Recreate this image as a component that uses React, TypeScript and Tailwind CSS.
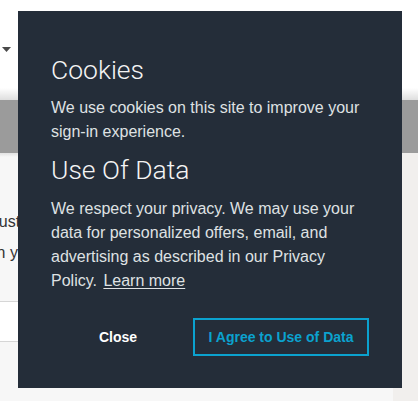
import React from 'react';

const CookieNotice: React.FC = () => {
  return (
    <div className="absolute left-[18px] top-[11px] h-[377px] w-[384px] bg-[#242d39] pl-[33px] pr-[31px] pt-[44px] font-['Liberation_Sans',Arial,sans-serif]">
      <h2 className="font-['Roboto',sans-serif] text-[26.5px] font-light leading-[30px] text-[#f4f4f4]">Cookies</h2>
      <p className="mt-[11px] text-[16px] leading-6 text-[#dfe1e3]">
        We use cookies on this site to improve your sign-in experience.
      </p>
      <h2 className="mt-[11px] font-['Roboto',sans-serif] text-[26.5px] font-light leading-[30px] text-[#f4f4f4]">Use Of Data</h2>
      <p className="mt-3 text-[16px] leading-6 text-[#dfe1e3]">
        We respect your privacy. We may use your data for personalized offers, email, and advertising as described in our Privacy Policy.{' '}
        <a href="#" className="ml-[2px] underline underline-offset-2">Learn more</a>
      </p>
      <div className="mt-[25px] flex items-center gap-2">
        <button className="h-[38px] w-[134px] text-[14px] font-bold text-white">Close</button>
        <button className="h-[38px] w-[176px] border-2 border-[#0ba2cf] text-[14px] font-bold text-[#0ba2cf]">
          I Agree to Use of Data
        </button>
      </div>
    </div>
  );
};

export default function App() {
  return (
    <div className="relative h-[401px] w-[418px] overflow-hidden bg-[#f1efed] font-['Liberation_Sans',Arial,sans-serif]">
      <div className="h-[100px] bg-white">
        <div className="h-[88px] pl-[2px] pt-[47px]">
          <svg width="9" height="5" viewBox="0 0 9 5">
            <path d="M0 0h9L4.5 5z" fill="#4a4a4a" />
          </svg>
        </div>
        <div className="h-[12px] bg-gradient-to-b from-white to-[#dedede]" />
      </div>
      <div className="h-[53px] bg-[#9b9b9b]" />
      <div className="h-[248px] w-[393px] bg-[#f7f7f7]">
        <div className="h-[4px] bg-gradient-to-b from-[#e2e2e2] to-[#f7f7f7]" />
        <div className="w-[18px] overflow-hidden">
          <p className="ml-[-46px] mt-[55px] whitespace-nowrap text-[16px] leading-5 text-[#333]">
            You must sign in
          </p>
          <p className="ml-[-31px] mt-[11px] whitespace-nowrap text-[16px] leading-5 text-[#333]">
            Then your email
          </p>
        </div>
        <div className="mt-[38px] h-[41px] border-y border-[#d6d6d6] bg-white" />
      </div>
      <CookieNotice />
    </div>
  );
}
